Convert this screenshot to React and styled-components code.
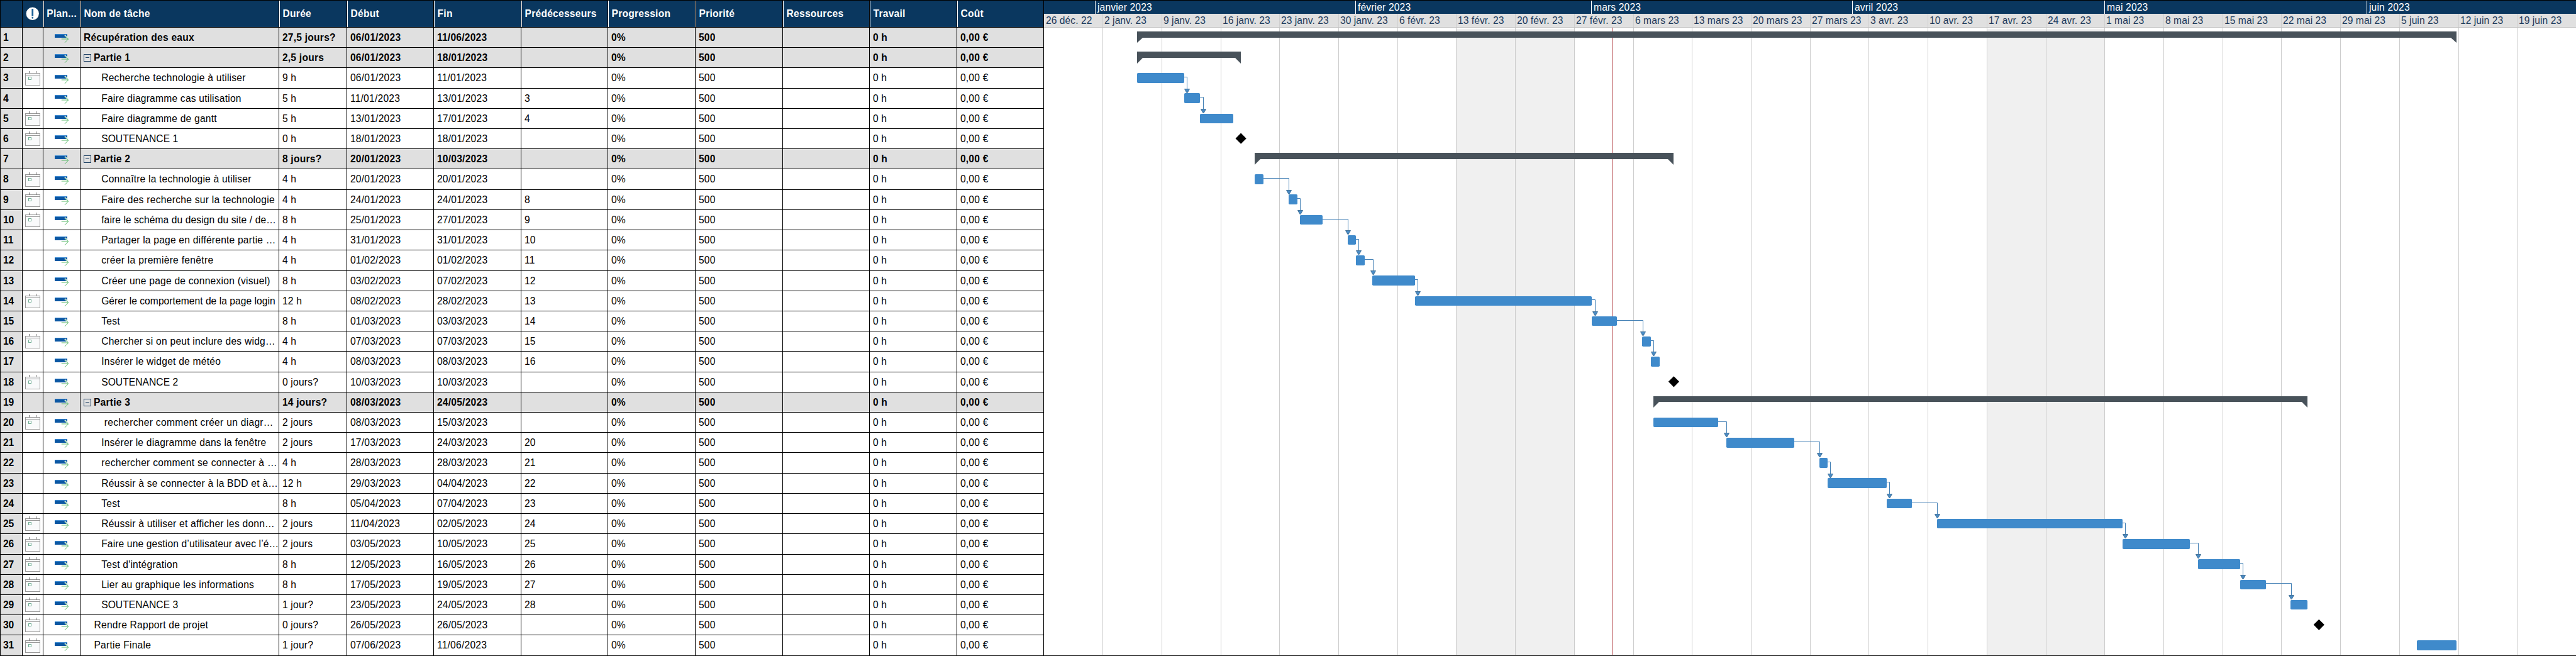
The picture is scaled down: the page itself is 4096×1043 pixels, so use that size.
import React from "react";
import styled, { createGlobalStyle } from "styled-components";

const K = 4096 / 4196;
const s = (n) => n * K;
const snap = (n) => Math.round(n * K);
const px = (n) => `${(n * K).toFixed(3)}px`;

const HEAD_H = 44;
const ROW_H = 33;
const CHART_X = 1701;
const FULL_W = 4196;

const BLACK = "#000000";
const NAVY = "#0a375f";
const GREY = "#e0e0e0";

const COLUMN_LINES = [0, 36, 70, 130, 454, 564, 706, 848, 990, 1132, 1274, 1416, 1558, 1700];
const tracks = (lines) =>
  lines
    .slice(1)
    .map((v, i) => `${snap(v) - snap(lines[i])}px`)
    .join(" ");

const columnTemplate = tracks(COLUMN_LINES);
const rowY = (i) => snap(HEAD_H + ROW_H * i);

const HEADERS = ["Nom de tâche", "Durée", "Début", "Fin", "Prédécesseurs", "Progression", "Priorité", "Ressources", "Travail", "Coût"];

/* [calendar, level, name, duration, start, end, predecessor, bar kind, x1, x2, name tracking] */
const TASKS = [
  [0, 0, "Récupération des eaux", "27,5 jours?", "06/01/2023", "11/06/2023", "", "sum", 1852, 4001.4, 0.25],
  [0, 1, "Partie 1", "2,5 jours", "06/01/2023", "18/01/2023", "", "sum", 1852, 2020.8],
  [1, 2, "Recherche technologie à utiliser", "9 h", "06/01/2023", "11/01/2023", "", "bar", 1852, 1929],
  [0, 2, "Faire diagramme cas utilisation", "5 h", "11/01/2023", "13/01/2023", "3", "bar", 1929, 1955, 0.21],
  [1, 2, "Faire diagramme de gantt", "5 h", "13/01/2023", "17/01/2023", "4", "bar", 1955, 2009.3, 0.2],
  [1, 2, "SOUTENANCE 1", "0 h", "18/01/2023", "18/01/2023", "", "dot", 2020.8, 0, 0.05],
  [0, 1, "Partie 2", "8 jours?", "20/01/2023", "10/03/2023", "", "sum", 2044.2, 2725.9],
  [1, 2, "Connaître la technologie à utiliser", "4 h", "20/01/2023", "20/01/2023", "", "bar", 2044.2, 2058.3, 0.19],
  [1, 2, "Faire des recherche sur la technologie", "4 h", "24/01/2023", "24/01/2023", "8", "bar", 2099.1, 2113.2, 0.27],
  [1, 2, "faire le schéma du design du site / de…", "8 h", "25/01/2023", "27/01/2023", "9", "bar", 2117.2, 2154, 0.09],
  [0, 2, "Partager la page en différente partie …", "4 h", "31/01/2023", "31/01/2023", "10", "bar", 2194.9, 2208.9, 0.2],
  [0, 2, "créer la première fenêtre", "4 h", "01/02/2023", "01/02/2023", "11", "bar", 2208.9, 2223, 0.29],
  [0, 2, "Créer une page de connexion (visuel)", "8 h", "03/02/2023", "07/02/2023", "12", "bar", 2235.7, 2304.7],
  [1, 2, "Gérer le comportement de la page login", "12 h", "08/02/2023", "28/02/2023", "13", "bar", 2304.7, 2593.3, 0.04],
  [0, 2, "Test", "8 h", "01/03/2023", "03/03/2023", "14", "bar", 2593.3, 2634.2],
  [1, 2, "Chercher si on peut inclure des widg…", "4 h", "07/03/2023", "07/03/2023", "15", "bar", 2675, 2689.1],
  [0, 2, "Insérer le widget de météo", "4 h", "08/03/2023", "08/03/2023", "16", "bar", 2689.1, 2703.1],
  [1, 2, "SOUTENANCE 2", "0 jours?", "10/03/2023", "10/03/2023", "", "dot", 2725.9, 0, 0.05],
  [0, 1, "Partie 3", "14 jours?", "08/03/2023", "24/05/2023", "", "sum", 2692.9, 3758.9],
  [1, 2, "\u00a0rechercher comment créer un diagr…", "2 jours", "08/03/2023", "15/03/2023", "", "bar", 2692.9, 2799.1, 0.28],
  [0, 2, "Insérer le diagramme dans la fenêtre", "2 jours", "17/03/2023", "24/03/2023", "20", "bar", 2811.6, 2922.3, 0.2],
  [0, 2, "rechercher comment se connecter à …", "4 h", "28/03/2023", "28/03/2023", "21", "bar", 2963.4, 2976.8, 0.28],
  [0, 2, "Réussir à se connecter à la BDD et à…", "12 h", "29/03/2023", "04/04/2023", "22", "bar", 2976.8, 3073.2, 0.23],
  [0, 2, "Test", "8 h", "05/04/2023", "07/04/2023", "23", "bar", 3073.2, 3114.3],
  [1, 2, "Réussir à utiliser et afficher les donn…", "2 jours", "11/04/2023", "02/05/2023", "24", "bar", 3155.4, 3457.1, 0.22],
  [1, 2, "Faire une gestion d’utilisateur avec l’é…", "2 jours", "03/05/2023", "10/05/2023", "25", "bar", 3457.1, 3567, 0.13],
  [1, 2, "Test d'intégration", "8 h", "12/05/2023", "16/05/2023", "26", "bar", 3580.4, 3649.1],
  [1, 2, "Lier au graphique les informations", "8 h", "17/05/2023", "19/05/2023", "27", "bar", 3649.1, 3690.5],
  [1, 2, "SOUTENANCE 3", "1 jour?", "23/05/2023", "24/05/2023", "28", "bar", 3731.3, 3758.9, 0.05],
  [1, 1, "Rendre Rapport de projet", "0 jours?", "26/05/2023", "26/05/2023", "", "dot", 3776.8],
  [1, 1, "Partie Finale", "1 jour?", "07/06/2023", "11/06/2023", "", "bar", 3937, 4001],
].map(([calendar, level, name, duration, start, end, pred, kind, x1, x2, tracking]) => ({
  calendar, level, name, duration, start, end, pred, kind, x1, x2, tracking,
}));

const WEEKS = [
  "26 déc. 22", "2 janv. 23", "9 janv. 23", "16 janv. 23", "23 janv. 23", "30 janv. 23", "6 févr. 23",
  "13 févr. 23", "20 févr. 23", "27 févr. 23", "6 mars 23", "13 mars 23", "20 mars 23", "27 mars 23",
  "3 avr. 23", "10 avr. 23", "17 avr. 23", "24 avr. 23", "1 mai 23", "8 mai 23", "15 mai 23",
  "22 mai 23", "29 mai 23", "5 juin 23", "12 juin 23", "19 juin 23",
];
const WEEK_LINES = [CHART_X, ...WEEKS.slice(1).map((_, i) => 1700 + 96 * (i + 1)), FULL_W];
const MONTHS = ["", "janvier 2023", "février 2023", "mars 2023", "avril 2023", "mai 2023", "juin 2023"];
const MONTH_LINES = [CHART_X, 1783, 2208, 2592, 3017, 3428, 3854.5, FULL_W];

const GlobalStyle = createGlobalStyle`
  body { margin: 0; background: #ffffff; }
`;

const Planner = styled.div`
  box-sizing: border-box;
  display: flex;
  width: 4096px;
  height: 1043px;
  overflow: hidden;
  border-bottom: 1px solid ${BLACK};
  background: #ffffff;
  color: #000000;
  font-family: "Liberation Sans", Arial, sans-serif;
  font-size: ${px(16)};
  line-height: 1;
`;

const Table = styled.div`
  flex: none;
  box-sizing: border-box;
  width: ${snap(CHART_X)}px;
  border-right: 1px solid ${BLACK};
`;

const TableRow = styled.div`
  display: grid;
  grid-template-columns: ${columnTemplate};
  height: ${(p) => p.$height}px;
  font-weight: ${(p) => (p.$summary ? 700 : 400)};
  background: ${(p) => (p.$summary ? GREY : "#ffffff")};
`;

const Cell = styled.div`
  box-sizing: border-box;
  display: flex;
  align-items: center;
  justify-content: ${(p) => (p.$center ? "center" : "flex-start")};
  min-width: 0;
  padding-left: ${(p) => (p.$center ? 0 : px(p.$indent ?? 5))};
  border-left: 1px solid ${BLACK};
  border-top: 1px solid ${BLACK};
  white-space: pre;
  letter-spacing: ${(p) => p.$tracking ?? 0.23}px;
`;

const NumberCell = styled(Cell)`
  background: ${GREY};
  font-weight: 700;
  letter-spacing: 0;
`;

const HeadCell = styled(Cell)`
  background: ${NAVY};
  color: #ffffff;
  font-weight: 700;
  box-shadow: ${(p) => (p.$edge ? "inset 1px 0 0 #ffffff" : "none")};
`;

const Toggle = styled.span`
  flex: none;
  box-sizing: border-box;
  display: flex;
  align-items: center;
  justify-content: center;
  width: 12px;
  height: 12px;
  margin-right: 4px;
  border: 1px solid #1c3f63;
  &::before {
    content: "";
    width: 6px;
    height: 1px;
    background: #1c3f63;
  }
`;

const Chart = styled.div`
  flex: 1;
  min-width: 0;
`;

const Months = styled.div`
  box-sizing: border-box;
  display: grid;
  grid-template-columns: ${tracks(MONTH_LINES)};
  height: ${snap(23)}px;
  border-top: 1px solid ${BLACK};
  background: ${NAVY};
  color: #ffffff;
  letter-spacing: 0.15px;
`;

const Month = styled.div`
  display: flex;
  align-items: center;
  padding-left: 3px;
  border-left: ${(p) => (p.$open ? "none" : "1px solid #ffffff")};
`;

const Weeks = styled.div`
  box-sizing: border-box;
  display: grid;
  grid-template-columns: ${tracks(WEEK_LINES)};
  height: ${snap(45) - snap(23)}px;
  border-bottom: 1px solid #c4c4c4;
  background: ${GREY};
  color: #1d3b5c;
  letter-spacing: 0.05px;
`;

const Week = styled.div`
  display: flex;
  align-items: center;
  padding-left: 2px;
  border-left: 1px solid ${(p) => (p.$open ? "transparent" : "#cfcfcf")};
  white-space: nowrap;
`;

const Plot = styled.svg`
  display: block;
`;

const Icon = styled.svg`
  flex: none;
  margin-top: ${(p) => p.$drop || 0}px;
`;

const InfoIcon = () => (
  <Icon width={s(22)} height={s(22)} viewBox="0 0 22 22">
    <circle cx="11" cy="11" r="10.4" fill="#ffffff" />
    <path d="M9.6 3.2h2.8v12h-2.8z" fill="#1d6299" />
    <circle cx="11" cy="17.8" r="1.4" fill="#1d6299" />
  </Icon>
);

const CalendarIcon = () => (
  <Icon width="24" height="23" viewBox="0 0 24 23" shapeRendering="crispEdges">
    <rect x="0.5" y="3.5" width="23" height="19" fill="#f9fafb" stroke="#999999" />
    <path d="M0 6.5h24" stroke="#999999" />
    <path d="M6.5 0v4M17.5 0v4" stroke="#777777" />
    <rect x="5.5" y="9.5" width="4" height="4" fill="#ffffff" stroke="#6fae94" />
  </Icon>
);

const PlanIcon = () => (
  <Icon width={s(23)} height={s(15)} viewBox="0 0 23 15" $drop={4}>
    <path d="M0 0h20v6.5H0z" fill="#0b57a3" shapeRendering="crispEdges" />
    <path d="M0 0.4h20" stroke="#4f9be0" strokeWidth="0.9" />
    <path d="M16.5 2l5 5" stroke="#dcebe8" strokeWidth="2.2" />
    <path d="M11 8.2h11M16.6 2.8l5.6 5.4-5.8 6" fill="none" stroke="#58b868" strokeWidth="1" />
  </Icon>
);

const INDENT = { 0: 5, 2: 34 };

function TaskRow({ task, index }) {
  const summary = task.kind === "sum";
  const indent = task.level === 1 ? (summary ? 5 : 22) : INDENT[task.level];
  return (
    <TableRow $height={rowY(index + 1) - rowY(index)} $summary={summary}>
      <NumberCell $indent={4}>{index + 1}</NumberCell>
      <Cell $center>{task.calendar ? <CalendarIcon /> : null}</Cell>
      <Cell $center>
        <PlanIcon />
      </Cell>
      <Cell $indent={indent} $tracking={task.tracking}>
        {summary && task.level === 1 && <Toggle />}
        {task.name}
      </Cell>
      <Cell>{task.duration}</Cell>
      <Cell>{task.start}</Cell>
      <Cell>{task.end}</Cell>
      <Cell>{task.pred}</Cell>
      <Cell>0%</Cell>
      <Cell>500</Cell>
      <Cell />
      <Cell>0 h</Cell>
      <Cell>0,00 €</Cell>
    </TableRow>
  );
}

const PLOT_TOP = snap(45);
const PLOT_LEFT = snap(CHART_X);
const gx = (n) => snap(n) - PLOT_LEFT;
const gy = (row, offset) => snap(HEAD_H + ROW_H * row + offset) - PLOT_TOP;

function SummaryBar({ task, row }) {
  const l = gx(task.x1);
  const r = gx(task.x2);
  const top = gy(row, 7);
  const bottom = gy(row, 17);
  const tip = gy(row, 26);
  return <path d={`M${l} ${top}H${r}V${tip}L${r - 9} ${bottom}H${l + 9}L${l} ${tip}Z`} fill="#48525a" />;
}

function TaskBar({ task, row }) {
  const top = gy(row, 9);
  return (
    <rect x={gx(task.x1)} y={top} width={gx(task.x2) - gx(task.x1)} height={gy(row, 25) - top} rx="1.8" fill="#3f8acb" />
  );
}

function Milestone({ task, row }) {
  const x = s(task.x1) - PLOT_LEFT + 0.5;
  const y = s(HEAD_H + ROW_H * row + 16.6) - PLOT_TOP;
  return <path d={`M${x} ${y - 8.6}l8.6 8.6l-8.6 8.6l-8.6-8.6z`} fill="#000000" />;
}

function Link({ from, to, row }) {
  const x = gx(Math.max(from.x2 + 4.3, to.x1 + 0.3)) + 0.5;
  const y = gy(row - 1, 15) + 0.5;
  const head = gy(row, 1);
  return (
    <g>
      <path d={`M${gx(from.x2)} ${y}H${x}V${head}`} fill="none" stroke="#4380b5" />
      <path d={`M${x - 4} ${head + 0.5}h8l-3.4 6h-1.2z`} fill="#4a8bc4" stroke="#2f5f88" strokeWidth="0.8" />
    </g>
  );
}

function GanttPlot() {
  const height = 1042 - PLOT_TOP;
  const width = 4096 - PLOT_LEFT;
  return (
    <Plot width={width} height={height}>
      {[[2372, 2564], [3236, 3428]].map(([a, b]) => (
        <rect key={a} x={gx(a)} y="2" width={gx(b) - gx(a)} height={height - 3} fill="#f0f0f0" />
      ))}
      {WEEK_LINES.slice(1, -1).map((x) => (
        <rect key={x} x={gx(x)} y="0" width="1" height={height - 1} fill="#cdcdcd" />
      ))}
      <rect x={gx(2626.4)} y="0" width="1" height={height - 1} fill="#b03a3e" />
      {TASKS.map((task, row) =>
        task.pred ? <Link key={row} from={TASKS[row - 1]} to={task} row={row} /> : null
      )}
      {TASKS.map((task, row) => {
        const Shape = { sum: SummaryBar, bar: TaskBar, dot: Milestone }[task.kind];
        return <Shape key={row} task={task} row={row} />;
      })}
    </Plot>
  );
}

export default function App() {
  return (
    <Planner>
      <GlobalStyle />
      <Table>
        <TableRow $height={rowY(0)}>
          <HeadCell />
          <HeadCell $center>
            <InfoIcon />
          </HeadCell>
          <HeadCell $edge $indent={5.5}>Plan...</HeadCell>
          {HEADERS.map((label) => (
            <HeadCell key={label} $edge $indent={5.7}>
              {label}
            </HeadCell>
          ))}
        </TableRow>
        {TASKS.map((task, i) => (
          <TaskRow key={i} task={task} index={i} />
        ))}
      </Table>
      <Chart>
        <Months>
          {MONTHS.map((label, i) => (
            <Month key={i} $open={i === 0}>
              {label}
            </Month>
          ))}
        </Months>
        <Weeks>
          {WEEKS.map((label, i) => (
            <Week key={label} $open={i === 0}>
              {label}
            </Week>
          ))}
        </Weeks>
        <GanttPlot />
      </Chart>
    </Planner>
  );
}
